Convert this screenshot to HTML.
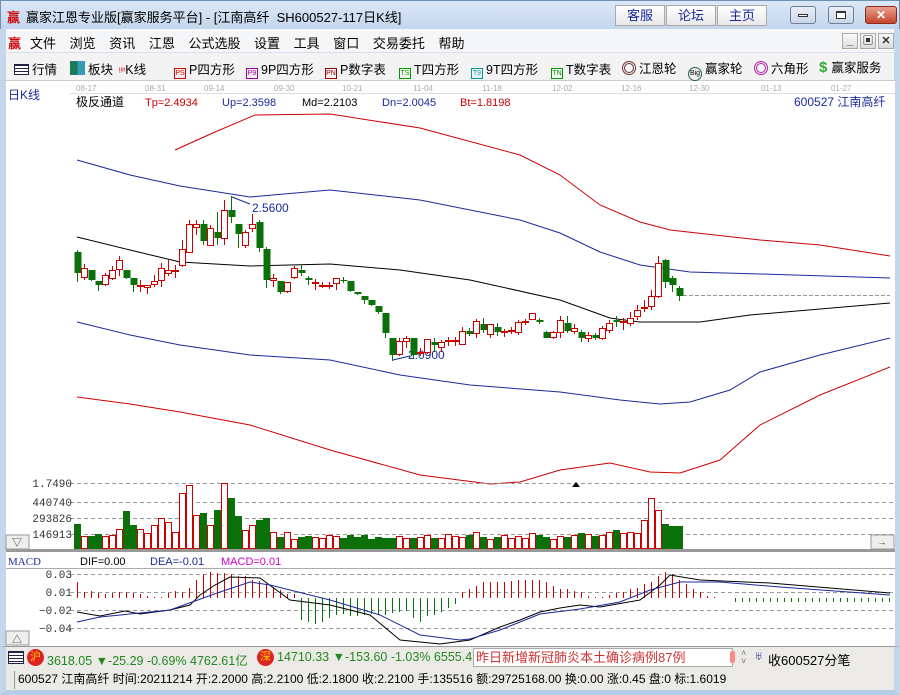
<!DOCTYPE html>
<html><head><meta charset="utf-8"><style>
*{margin:0;padding:0;box-sizing:border-box}
body{width:900px;height:695px;overflow:hidden;background:#fff;font-family:"Liberation Sans","Noto Sans CJK SC",sans-serif;font-size:12px;position:relative}
.abs{position:absolute;white-space:nowrap}
#title{left:0;top:0;width:900px;height:29px;background:linear-gradient(#dbe8f6,#c3d6ec);border:1px solid #6f8fb3;border-bottom:none}
#menu{left:0;top:29px;width:900px;height:24px;background:#f5f6f7;border-left:6px solid #c3d6ec;border-right:6px solid #c3d6ec;border-bottom:1px solid #dde}
#tool{left:0;top:53px;width:900px;height:28px;background:#f3f3f3;border-left:6px solid #c3d6ec;border-right:6px solid #c3d6ec;border-bottom:1px solid #ccc}
.tb{top:4px;width:50px;height:21px;background:linear-gradient(#fff,#e8e8e8);border:1px solid #aaa;color:#1a2a9a;font-size:13px;text-align:center;line-height:19px}
.wb{top:5px;width:26px;height:18px;border:1px solid #6d7f99;border-radius:3px;background:linear-gradient(#e8eef7,#c9d6e8)}
.ico{display:inline-block;width:12px;height:11px;border:1px solid;font-size:7px;line-height:9px;text-align:center;vertical-align:-1px;margin-right:3px}
#st1{left:0;top:646px;width:900px;height:23px;background:#eceae6;border-left:6px solid #c3d6ec;border-right:6px solid #c3d6ec;border-top:1px solid #999}
#st2{left:0;top:669px;width:900px;height:26px;background:#eceae6;border:6px solid #c3d6ec;border-top:none;border-bottom:5px solid #b7cde5}
.btn{background:linear-gradient(#fafafa,#dcdcdc);border:1px solid #aaa;text-align:center;font-size:11px;color:#333}
</style></head><body>
<div id="title" class="abs">
 <span class="abs" style="left:6px;top:6px;color:#c00;font-weight:bold;font-size:13px">赢</span>
 <span class="abs" style="left:25px;top:6px;font-size:13px;color:#000">赢家江恩专业版[赢家服务平台] - [江南高纤&nbsp; SH600527-117日K线]</span>
 <div class="abs tb" style="left:614px">客服</div><div class="abs tb" style="left:665px">论坛</div><div class="abs tb" style="left:716px">主页</div>
 <div class="abs wb" style="left:789px"><div style="margin:7px auto;width:10px;height:3px;border:1px solid #333;background:#fff"></div></div>
 <div class="abs wb" style="left:827px"><div style="margin:4px auto;width:10px;height:8px;border:1px solid #333;border-top-width:2px;background:#fff"></div></div>
 <div class="abs wb" style="left:864px;width:32px;background:linear-gradient(#e9a18f,#c4442a);border-color:#8b2a1a;color:#fff;font-weight:bold;text-align:center;line-height:16px">✕</div>
</div>
<div id="menu" class="abs">
 <span class="abs" style="left:2px;top:4px;color:#c00;font-weight:bold;font-size:13px">赢</span>
 <span class="abs" style="left:24px;top:4px;font-size:13px;word-spacing:10px">文件 浏览 资讯 江恩 公式选股 设置 工具 窗口 交易委托 帮助</span>
 <div class="abs btn" style="left:836px;top:4px;width:16px;height:16px;font-weight:bold;line-height:14px">_</div>
 <div class="abs btn" style="left:854px;top:4px;width:16px;height:16px;font-weight:bold;line-height:14px">▣</div>
 <div class="abs btn" style="left:872px;top:4px;width:16px;height:16px;font-weight:bold;line-height:14px">✕</div>
</div>
<div id="tool" class="abs" style="font-size:12.5px">
 <span class="abs" style="left:8px;top:6px"><span class="ico" style="width:15px;border-color:#224;background:repeating-linear-gradient(#224 0 1px,#fff 1px 3px)"></span>行情</span>
 <span class="abs" style="left:64px;top:6px"><span class="ico" style="width:15px;height:14px;border:none;background:linear-gradient(90deg,#1a7a5a 50%,#3a9ab0 50%)"></span>板块</span>
 <span class="abs" style="left:113px;top:6px"><span style="color:#c00;font-size:10px">ᵎᵎᶦᶦ</span>K线</span>
 <span class="abs" style="left:168px;top:6px"><span class="ico" style="color:#c00;border-color:#c00">PS</span>P四方形</span>
 <span class="abs" style="left:240px;top:6px"><span class="ico" style="color:#909;border-color:#909">P9</span>9P四方形</span>
 <span class="abs" style="left:319px;top:6px"><span class="ico" style="color:#900;border-color:#900">PN</span>P数字表</span>
 <span class="abs" style="left:393px;top:6px"><span class="ico" style="color:#090;border-color:#090">TS</span>T四方形</span>
 <span class="abs" style="left:465px;top:6px"><span class="ico" style="color:#099;border-color:#099">T9</span>9T四方形</span>
 <span class="abs" style="left:545px;top:6px"><span class="ico" style="color:#090;border-color:#090">TN</span>T数字表</span>
 <span class="abs" style="left:616px;top:5px"><span style="display:inline-block;width:14px;height:14px;border-radius:50%;border:3px double #633;vertical-align:-2px;margin-right:3px"></span>江恩轮</span>
 <span class="abs" style="left:682px;top:5px"><span style="display:inline-block;width:14px;height:14px;border-radius:50%;border:1px solid #264;font-size:7px;text-align:center;line-height:12px;vertical-align:-2px;margin-right:3px">Big</span>赢家轮</span>
 <span class="abs" style="left:748px;top:5px"><span style="display:inline-block;width:14px;height:14px;border-radius:50%;border:3px double #a2a;vertical-align:-2px;margin-right:3px"></span>六角形</span>
 <span class="abs" style="left:813px;top:4px"><span style="color:#3a3;font-weight:bold;font-size:15px;margin-right:4px">$</span>赢家服务</span>
</div>
<svg class="abs" style="left:0;top:81px" width="900" height="565" viewBox="0 81 900 565" id="ch">
 <rect x="0" y="81" width="900" height="565" fill="#fff"/>
 <rect x="0" y="81" width="6" height="565" fill="#c3d6ec"/><rect x="895" y="81" width="5" height="565" fill="#c3d6ec"/>
 <g font-family="Liberation Sans" font-size="8" fill="#aaa">
  <text x="76" y="91">08-17</text><text x="145" y="91">08-31</text><text x="204" y="91">09-14</text><text x="274" y="91">09-30</text><text x="342" y="91">10-21</text><text x="413" y="91">11-04</text><text x="482" y="91">11-18</text><text x="552" y="91">12-02</text><text x="621" y="91">12-16</text><text x="689" y="91">12-30</text><text x="761" y="91">01-13</text><text x="831" y="91">01-27</text>
 </g>
 <line x1="70" y1="93.5" x2="895" y2="93.5" stroke="#ddd"/>
 <text x="8" y="99" font-size="12" fill="#1a2a9a" font-family="Liberation Sans,Noto Sans CJK SC">日K线</text>
 <g font-family="Liberation Sans,Noto Sans CJK SC" font-size="11">
  <text x="76" y="106" fill="#000" font-size="12">极反通道</text>
  <text x="145" y="106" fill="#c00">Tp=2.4934</text><text x="222" y="106" fill="#1a2a9a">Up=2.3598</text>
  <text x="302" y="106" fill="#000">Md=2.2103</text><text x="382" y="106" fill="#1a2a9a">Dn=2.0045</text>
  <text x="460" y="106" fill="#c00">Bt=1.8198</text>
  <text x="794" y="106" fill="#1a2a9a" font-size="12">600527 江南高纤</text>
 </g>
 <g fill="none" stroke-width="1">
  <polyline stroke="#c00" points="175,150 215,132 255,115 330,114 420,128 520,155 560,175 600,205 640,222 670,230 760,240 820,245 890,256"/>
  <polyline stroke="#1a2a9a" points="77,160 130,175 180,186 250,197 330,190 420,200 520,220 560,233 600,252 640,265 690,272 760,274 890,278"/>
  <polyline stroke="#000" points="77,237 130,250 180,262 250,266 330,264 400,270 470,280 560,300 610,318 640,322 700,322 750,315 890,303"/>
  <polyline stroke="#1a2a9a" points="77,322 130,335 180,345 250,355 330,360 400,375 470,385 560,392 620,400 660,404 690,402 730,390 760,372 820,355 890,338"/>
  <polyline stroke="#c00" points="77,397 130,404 180,412 250,425 330,450 420,475 490,484 520,482 560,470 610,463 650,472 680,473 720,460 760,425 820,395 890,367"/>
  <line x1="683" y1="295.5" x2="890" y2="295.5" stroke="#999" stroke-dasharray="4,2"/>
  <polyline stroke="#1a2a9a" points="232,197 250,204"/>
  <polyline stroke="#1a2a9a" points="393,360 410,356"/>
 </g>
 <text x="252" y="212" font-size="12" fill="#1a2a9a" font-family="Liberation Sans">2.5600</text>
 <text x="408" y="359" font-size="12" fill="#1a2a9a" font-family="Liberation Sans">2.0900</text>
 <g id="cand"></g>
 <g stroke="#999" stroke-dasharray="4,3">
  <line x1="70" y1="483.5" x2="895" y2="483.5"/><line x1="70" y1="502.5" x2="895" y2="502.5"/><line x1="70" y1="518.5" x2="895" y2="518.5"/><line x1="70" y1="534.5" x2="895" y2="534.5"/>
  <line x1="70" y1="574.5" x2="895" y2="574.5"/><line x1="70" y1="592.5" x2="895" y2="592.5"/><line x1="70" y1="610.5" x2="895" y2="610.5"/><line x1="70" y1="628.5" x2="895" y2="628.5"/>
 </g>
 <path d="M572,487 l4,-5 l4,5z" fill="#000"/>
 <g font-family="Liberation Mono" font-size="11" fill="#333" text-anchor="end">
  <text x="72" y="487">1.7490</text><text x="72" y="506">440740</text><text x="72" y="522">293826</text><text x="72" y="538">146913</text>
  <text x="72" y="578">0.03</text><text x="72" y="596">0.01</text><text x="72" y="614">−0.02</text><text x="72" y="632">−0.04</text>
 </g>
 <g id="vol"></g>
 <rect x="6" y="549" width="889" height="3" fill="#999"/>
 <line x1="6" y1="568.5" x2="895" y2="568.5" stroke="#aaa"/>
 <text x="8" y="565" font-family="Liberation Serif" font-size="11" fill="#1a2a9a">MACD</text>
 <g font-family="Liberation Sans" font-size="11"><text x="80" y="565" fill="#000">DIF=0.00</text><text x="150" y="565" fill="#1a2a9a">DEA=-0.01</text><text x="221" y="565" fill="#c0c">MACD=0.01</text></g>
 <g id="mh"></g>
 <polyline fill="none" stroke="#000" points="77,612 100,616 125,611 140,614 170,610 190,605 200,595 215,585 230,577 260,578 290,600 330,605 370,615 400,640 440,644 470,640 500,627 520,620 540,612 560,608 580,605 600,607 640,600 660,585 670,575 700,580 770,583 890,593"/>
 <polyline fill="none" stroke="#1a2a9a" points="77,622 100,617 140,613 170,610 220,592 250,582 270,585 330,600 380,615 420,635 460,640 470,639 500,630 540,614 580,609 620,602 650,590 680,582 720,582 780,587 890,595"/>
 <rect x="6" y="535" width="23" height="14" fill="#eee" stroke="#999"/><text x="17" y="546" font-size="10" text-anchor="middle" fill="#333">▽</text>
 <rect x="6" y="631" width="23" height="14" fill="#eee" stroke="#999"/><text x="17" y="643" font-size="10" text-anchor="middle" fill="#333">△</text>
 <rect x="871" y="535" width="23" height="14" fill="#eee" stroke="#999"/><text x="882" y="545" font-size="9" text-anchor="middle" fill="#333">→</text>
</svg>
<div id="st1" class="abs" style="font-size:12.5px">
 <span class="abs" style="left:2px;top:4px;width:16px;height:13px;border:1px solid #224;background:repeating-linear-gradient(#224 0 1px,#fff 1px 3px)"></span>
 <span class="abs" style="left:21px;top:2px;width:17px;height:17px;border-radius:50%;background:#d22;color:#fc0;font-size:11px;text-align:center;line-height:17px">沪</span>
 <span class="abs" style="left:41px;top:3px;color:#228822">3618.05 ▼-25.29 -0.69% 4762.61亿</span>
 <span class="abs" style="left:251px;top:2px;width:17px;height:17px;border-radius:50%;background:#d22;color:#fc0;font-size:11px;text-align:center;line-height:17px">深</span>
 <span class="abs" style="left:271px;top:3px;color:#228822;width:196px;overflow:hidden">14710.33 ▼-153.60 -1.03% 6555.4</span>
 <span class="abs" style="left:467px;top:1px;width:260px;height:19px;background:#fff;border:1px solid #aaa;color:#c33;font-size:13px;padding-left:2px;line-height:17px">昨日新增新冠肺炎本土确诊病例87例</span>
 <span class="abs" style="left:724px;top:4px;width:5px;height:12px;background:#f88;border-radius:2px"></span>
 <span class="abs" style="left:735px;top:2px;font-size:9px;color:#777;line-height:8px">˄<br>˅</span>
 <span class="abs" style="left:748px;top:2px;color:#1a2a9a">♅</span>
 <span class="abs" style="left:762px;top:3px;color:#000;font-size:13px">收600527分笔</span>
</div>
<div id="st2" class="abs">
 <span class="abs" style="left:8px;top:2px;width:875px;height:18px;border-left:1px solid #999;padding-left:3px;font-size:12px;color:#000;line-height:17px">600527 江南高纤 时间:20211214 开:2.2000 高:2.2100 低:2.1800 收:2.2100 手:135516 额:29725168.00 换:0.00 涨:0.45 盘:0 标:1.6019</span>
</div>
<script>
var C=[
[252,273,0,250,282],[268,277,1,264,280],[270,280,0,270,281],[281,285,0,281,291],[275,284,1,273,286],[270,278,1,266,280],[260,269,1,256,276],[270,278,0,270,279],[278,285,0,278,292],[285,286,1,280,292],
[285,287,1,285,294],[281,284,1,275,287],[268,280,1,263,287],[270,273,1,260,276],[270,271,1,265,278],[249,265,1,240,267],[224,252,1,220,253],[224,227,1,220,235],[224,241,0,220,245],[228,245,1,225,246],
[232,238,0,212,245],[210,238,1,200,245],[210,217,0,196,223],[224,234,0,224,248],[232,245,1,230,248],[224,228,1,214,232],[222,248,0,220,252],[249,280,0,247,288],[278,280,1,274,287],[281,292,0,281,294],
[282,291,1,282,293],[268,277,1,266,279],[270,273,0,264,276],[278,280,0,276,285],[282,283,1,279,290],[285,286,1,282,288],[285,286,1,282,289],[278,283,1,278,290],[280,281,0,277,283],[281,291,0,281,292],
[292,294,0,292,295],[296,300,0,296,304],[300,305,0,300,306],[306,312,0,306,314],[313,333,0,313,338],[338,355,0,338,361],[341,354,1,338,356],[338,341,1,336,348],[338,355,0,338,359],[352,353,1,348,356],
[339,352,1,339,354],[342,345,0,338,352],[342,347,1,340,352],[340,341,1,337,346],[340,341,1,337,346],[331,344,1,327,345],[331,334,0,328,336],[321,333,1,319,338],[324,330,0,318,333],[324,334,1,324,338],
[327,332,0,323,336],[331,332,1,329,337],[330,331,1,327,334],[322,332,1,320,335],[321,322,1,319,325],[313,319,1,313,320],[320,322,0,318,324],[332,338,0,331,338],[332,337,1,331,339],[320,332,1,316,338],
[323,331,0,316,333],[328,331,1,324,334],[332,338,0,330,342],[335,338,1,332,342],[335,338,0,333,340],[328,338,1,326,340],[323,330,1,320,333],[320,322,0,316,327],[321,322,1,318,330],[318,323,1,312,326],
[310,316,1,305,320],[307,308,1,300,312],[296,306,1,290,310],[263,296,1,256,298],[260,282,0,259,288],[278,285,0,276,292],[288,296,0,286,301]];
var V=[524,536,536,534,536,535,529,511,525,529,533,525,518,522,532,493,485,515,513,525,510,483,498,516,530,525,520,518,532,537,532,539,537,536,537,538,535,536,538,535,537,535,539,537,538,538,536,538,538,537,535,538,538,534,536,537,535,532,537,539,537,535,538,536,538,533,535,537,539,536,537,535,533,534,536,535,532,530,533,532,533,520,498,510,524,526,526];
var ns='http://www.w3.org/2000/svg',g=document.getElementById('cand'),vg=document.getElementById('vol'),mg=document.getElementById('mh');
function el(p,t,a){var e=document.createElementNS(ns,t);for(var k in a)e.setAttribute(k,a[k]);p.appendChild(e);}
var H=[ -16,-6,-7,-5,-4,-5,-6,-6,-5,-4,-2,-1,-1,-5,-7,-6,-10,-18,-24,-26,-25,-25,-24,-22,-22,-18,-17,-14,-10,-8,-4,-4,
 22,24,26,24,20,17,16,18,18,17,16,16,17,15,14,13,20,24,18,17,14,10,6,
 -6,-9,-12,-16,-16,-16,-16,-17,-18,-18,-18,-18,-16,-12,-9,-9,-7,-6,-2,-1,-1,-3,-5,-6,-9,-10,-14,-16,-22,-26,-24,-18,-14,-9,-6,-2,-1];
for(var i=0;i<C.length;i++){var c=C[i],x=77+i*7,col=c[2]?'#c00':'#0a700a';
 el(g,'line',{x1:x+.5,x2:x+.5,y1:c[3],y2:c[4],stroke:col});
 var h=Math.max(1,c[1]-c[0]);
 if(c[2]) el(g,'rect',{x:x-2.5,y:c[0]+.5,width:6,height:h,fill:'#fff',stroke:col});
 else el(g,'rect',{x:x-2.5,y:c[0],width:7,height:h,fill:col});
 var v=V[i];
 if(c[2]) el(vg,'rect',{x:x-2.5,y:v+.5,width:6,height:549-v-1,fill:'#fff',stroke:'#c00'});
 else el(vg,'rect',{x:x-3,y:v,width:7,height:549-v,fill:'#0a700a'});
}
for(var i=0;i<H.length;i++){var x=77.5+i*7,h=H[i],col=h<0?'#c00':'#0a700a';
 el(mg,'line',{x1:x,x2:x,y1:598,y2:598+h,stroke:col});}
for(var x=735.5;x<892;x+=7) el(mg,'line',{x1:x,x2:x,y1:598,y2:602,stroke:'#0a700a'});
</script>
</body></html>
